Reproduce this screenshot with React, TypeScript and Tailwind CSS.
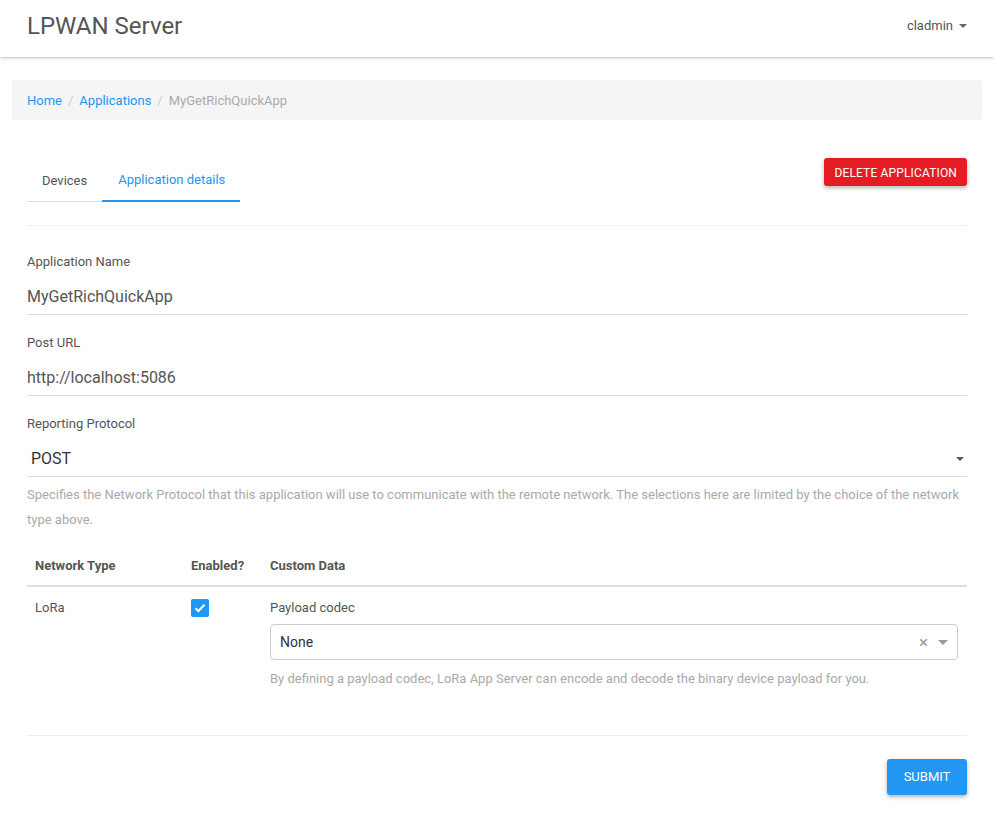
import React from 'react';

const font = { fontFamily: 'Roboto, "Noto Sans", Arial, sans-serif' };

function Caret({ className = '' }: { className?: string }) {
  return (
    <span
      className={`inline-block w-0 h-0 border-l-[4px] border-r-[4px] border-t-[4px] border-l-transparent border-r-transparent ${className}`}
    />
  );
}

function Field({ label, value }: { label: string; value: string }) {
  return (
    <div className="mb-[19px]">
      <div className="text-[13px] leading-[16px] text-[#555] pt-[1px]">{label}</div>
      <div className="mt-[8px] h-[37px] pt-[2px] flex items-center border-b border-[#ddd] text-[16px] text-[#555]">
        {value}
      </div>
    </div>
  );
}

export default function App() {
  return (
    <div className="min-h-[813px] bg-white" style={font}>
      <header className="h-[57px] px-[27px] pb-[6px] flex items-center justify-between bg-white shadow-[0_1px_3px_rgba(0,0,0,0.25)] relative">
        <div className="text-[24px] text-[#555] leading-none">LPWAN Server</div>
        <div className="flex items-center gap-[6px] text-[13px] text-[#555] pl-[1px]">
          cladmin
          <Caret className="border-t-[#666]" />
        </div>
      </header>

      <main className="px-[12px] pt-[23px]">
        <div className="h-[40px] bg-[#f5f5f5] rounded-[3px] px-[15px] pt-[2px] flex items-center text-[13px]">
          <span className="text-[#2196f3]">Home</span>
          <span className="px-[6px] text-[#ccc]">/</span>
          <span className="text-[#2196f3]">Applications</span>
          <span className="px-[6px] text-[#ccc]">/</span>
          <span className="text-[#aaa]">MyGetRichQuickApp</span>
        </div>

        <div className="px-[15px]">
          <div className="mt-[38px] flex justify-between items-start">
            <div className="flex text-[13px]">
              <div className="h-[44px] px-[15px] pt-[2px] flex items-center border-b border-[#ddd] text-[#555]">
                Devices
              </div>
              <div className="h-[44px] pl-[16px] pr-[15px] pt-[2px] flex items-center border-b-2 border-[#2196f3] text-[#2196f3]">
                Application details
              </div>
            </div>
            <button className="h-[28px] px-[10px] pt-[2px] rounded-[3px] bg-[#e51c23] text-white text-[12px] tracking-[0.15px] uppercase shadow-[0_2px_4px_rgba(0,0,0,0.3)]">
              Delete Application
            </button>
          </div>

          <div className="mt-[23px] border-t border-[#eee]" />

          <div className="pt-[27px]">
            <Field label="Application Name" value="MyGetRichQuickApp" />
            <Field label="Post URL" value="http://localhost:5086" />
            <div>
              <div className="text-[13px] leading-[16px] text-[#555] pt-[1px]">Reporting Protocol</div>
              <div className="mt-[8px] h-[37px] pt-[2px] flex items-center justify-between border-b border-[#ddd] text-[16px] text-[#333] pl-[4px] pr-[3px]">
                POST
                <Caret className="border-t-[#555]" />
              </div>
              <div className="mt-[5px] text-[13px] leading-[25px] text-[#aaa]">
                Specifies the Network Protocol that this application will use to communicate with the remote network. The selections here are limited by the choice of the network type above.
              </div>
            </div>

            <div className="mt-[13px]">
              <div className="h-[42px] pt-[2px] flex items-center border-b-2 border-[#ddd] text-[13px] font-bold text-[#555]">
                <div className="w-[156px] pl-[8px]">Network Type</div>
                <div className="w-[79px] pl-[8px]">Enabled?</div>
                <div className="flex-1 pl-[8px]">Custom Data</div>
              </div>
              <div className="flex pt-[12px] text-[13px] text-[#555]">
                <div className="w-[156px] pl-[8px] leading-[16px] pt-[1px]">LoRa</div>
                <div className="w-[79px] pl-[8px]">
                  <div className="w-[18px] h-[18px] rounded-[2px] bg-[#2196f3] flex items-center justify-center">
                    <svg width="12" height="10" viewBox="0 0 12 10" fill="none">
                      <path d="M1.5 5.2 L4.5 8 L10.5 1.8" stroke="white" strokeWidth="2" />
                    </svg>
                  </div>
                </div>
                <div className="flex-1 pl-[8px] pr-[9px]">
                  <div className="leading-[16px] pt-[1px]">Payload codec</div>
                  <div className="mt-[8px] h-[36px] border border-[#ccc] rounded-[4px] flex items-center pl-[9px] pr-[9px] text-[14px] text-[#333]">
                    <span className="flex-1">None</span>
                    <span className="text-[#999] text-[17px] leading-none mr-[10px]">×</span>
                    <Caret className="border-l-[5px] border-r-[5px] border-t-[5px] border-t-[#999]" />
                  </div>
                  <div className="mt-[11px] leading-[16px] text-[#aaa]">
                    By defining a payload codec, LoRa App Server can encode and decode the binary device payload for you.
                  </div>
                </div>
              </div>
            </div>

            <div className="mt-[48px] border-t border-[#eee]" />

            <div className="flex justify-end pt-[23px] pb-[18px]">
              <button className="h-[36px] w-[80px] rounded-[3px] bg-[#2196f3] text-white text-[13px] uppercase shadow-[0_2px_4px_rgba(0,0,0,0.3)]">
                Submit
              </button>
            </div>
          </div>
        </div>
      </main>
    </div>
  );
}
